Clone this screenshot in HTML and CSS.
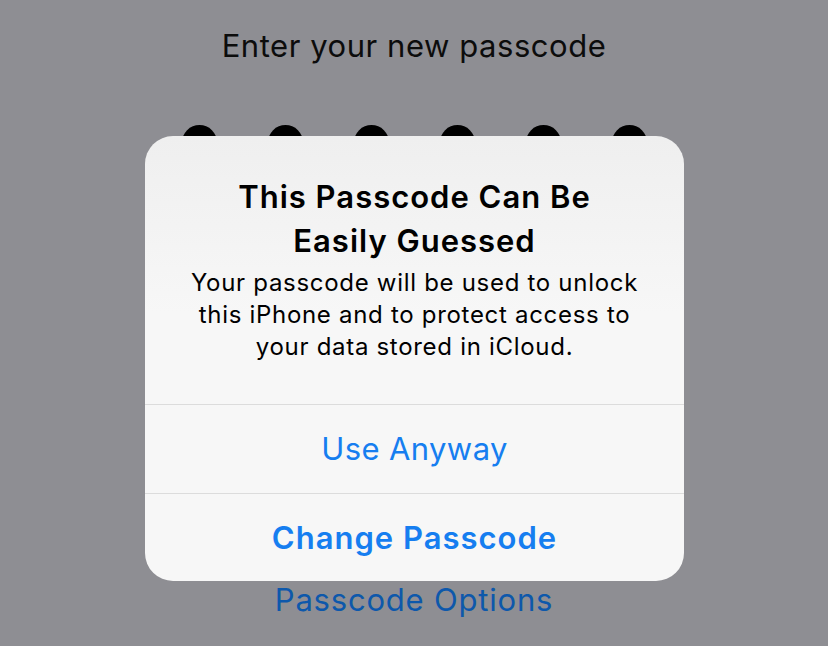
FILE: index.html
```html
<!DOCTYPE html>
<html>
<head>
<meta charset="utf-8">
<link rel="stylesheet" href="styles.css">
</head>
<body>
<div class="screen">
  <div class="prompt">Enter your new passcode</div>
  <div class="dots">
    <span class="dot"></span><span class="dot"></span><span class="dot"></span>
    <span class="dot"></span><span class="dot"></span><span class="dot"></span>
  </div>
  <div class="spacer"></div>
  <div class="options">Passcode Options</div>

  <div class="alert">
    <div class="alert-body">
      <div class="alert-title">This Passcode Can Be<br>Easily Guessed</div>
      <div class="alert-msg">Your passcode will be used to unlock<br>this iPhone and to protect access to<br>your data stored in iCloud.</div>
    </div>
    <div class="alert-btn">Use Anyway</div>
    <div class="alert-btn bold">Change Passcode</div>
  </div>
</div>
</body>
</html>
```

FILE: styles.css
```css
html, body {
  margin: 0;
  padding: 0;
  background: #8e8e93;
}
.screen {
  position: relative;
  width: 828px;
  height: 646px;
  display: flex;
  flex-direction: column;
  align-items: center;
  font-family: Inter, "Liberation Sans", sans-serif;
  overflow: hidden;
}
.prompt {
  margin-top: 26px;
  font-size: 31px;
  letter-spacing: 0.55px;
  line-height: 40px;
  color: #0c0c0c;
}
.dots {
  margin-top: 59px;
  display: flex;
  gap: 51px;
}
.dot {
  width: 35px;
  height: 35px;
  border-radius: 50%;
  background: #000;
}
.spacer { flex: 1; }
.options {
  margin-bottom: 26px;
  font-size: 31px;
  letter-spacing: 0.8px;
  line-height: 40px;
  color: #0d58ab;
}
.alert {
  position: absolute;
  left: 145px;
  top: 136px;
  width: 539px;
  height: 445px;
  border-radius: 28px;
  background: linear-gradient(#efefef, #f7f7f7 40%, #f7f7f7);
  display: flex;
  flex-direction: column;
  overflow: hidden;
}
.alert-body {
  padding: 39px 10px 41px;
  text-align: center;
  color: #000;
}
.alert-title {
  font-size: 31px;
  font-weight: 600;
  letter-spacing: 1px;
  line-height: 44px;
}
.alert-msg {
  margin-top: 4px;
  font-size: 24px;
  letter-spacing: 0.7px;
  line-height: 32px;
}
.alert-btn {
  flex: 1;
  display: flex;
  align-items: center;
  justify-content: center;
  border-top: 1px solid #dcdcdc;
  font-size: 31px;
  letter-spacing: 0.4px;
  color: #167ef0;
}
.alert-btn.bold {
  font-weight: 600;
  letter-spacing: 1px;
}
```
